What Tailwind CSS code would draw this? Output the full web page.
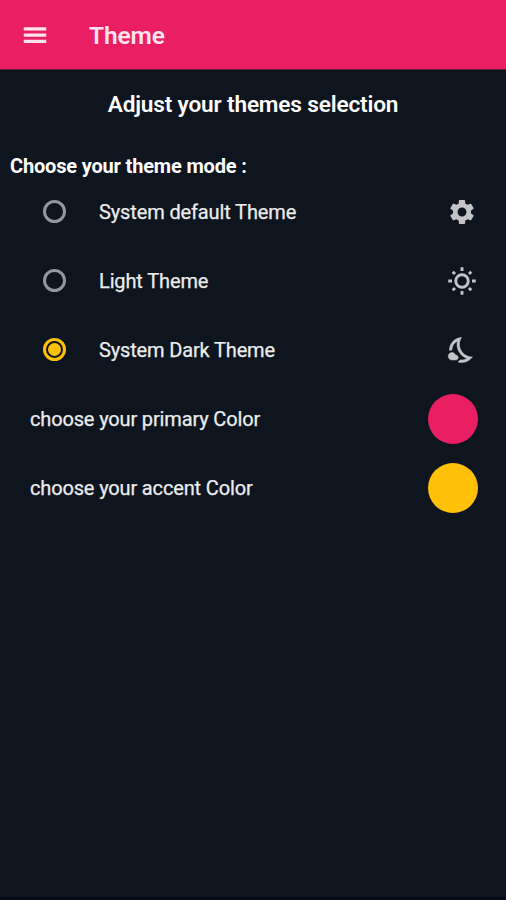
<!DOCTYPE html>
<html lang="en">
<head>
<meta charset="utf-8">
<title>Theme</title>
<script src="https://cdn.jsdelivr.net/npm/@tailwindcss/browser@4"></script>
</head>
<body class="w-[506px] h-[900px] overflow-hidden bg-[#0e151f] font-[Roboto,sans-serif] text-[#ececec] flex flex-col">
<header class="h-[70px] shrink-0 bg-[#e91e63] border-b border-[#68183a] flex items-center pl-5 text-[#ffe4ed]">
  <svg class="w-[30px] h-[30px]" viewBox="0 0 24 24" fill="currentColor"><path d="M3 18.3h18v-2.5H3v2.5zm0-5h18v-2.5H3v2.5zm0-7.5v2.5h18V5.800H3z"/></svg>
  <h1 class="ml-[39px] mt-[2px] text-[24.5px] font-semibold tracking-[-0.1px] leading-8 whitespace-nowrap">Theme</h1>
</header>
<main class="flex flex-col flex-1">
  <h2 class="h-[70px] text-center text-[22.6px] leading-[70px] font-semibold tracking-[-0.16px] text-white whitespace-nowrap">Adjust your themes selection</h2>
  <h3 class="h-[37px] pl-[10px] pt-[7px] text-[20px] leading-[38px] font-bold tracking-[-0.17px] text-white whitespace-nowrap">Choose your theme mode :</h3>
  <label class="h-[69px] flex items-center pl-[43px] pr-[29px]">
    <span class="size-[23px] rounded-full border-3 border-[#94979e]"></span>
    <span class="ml-[33px] text-[20px] tracking-[-0.13px] [-webkit-text-stroke:0.25px_#ececec] flex-1 whitespace-nowrap">System default Theme</span>
    <svg class="size-[30px] text-[#c3c4c8]" viewBox="0 0 24 24" fill="currentColor"><path d="M19.14 12.94c.04-.3.06-.61.06-.94 0-.32-.02-.64-.07-.94l2.03-1.58c.18-.14.23-.41.12-.61l-1.92-3.32c-.12-.22-.37-.29-.59-.22l-2.39.96c-.5-.38-1.03-.7-1.62-.94l-.36-2.54c-.04-.24-.24-.41-.48-.41h-3.84c-.24 0-.43.17-.47.41l-.36 2.54c-.59.24-1.13.57-1.62.94l-2.39-.96c-.22-.08-.47 0-.59.22L2.74 8.87c-.12.21-.08.47.12.61l2.03 1.58c-.05.3-.09.63-.09.94s.02.64.07.94l-2.03 1.58c-.18.14-.23.41-.12.61l1.92 3.32c.12.22.37.29.59.22l2.39-.96c.5.38 1.03.7 1.62.94l.36 2.54c.05.24.24.41.48.41h3.84c.24 0 .44-.17.47-.41l.36-2.54c.59-.24 1.13-.56 1.62-.94l2.39.96c.22.08.47 0 .59-.22l1.92-3.32c.12-.22.07-.47-.12-.61l-2.01-1.58zM12 15.6c-1.98 0-3.6-1.62-3.6-3.6s1.62-3.6 3.6-3.6 3.6 1.62 3.6 3.6-1.62 3.6-3.6 3.6z"/></svg>
  </label>
  <label class="h-[69px] flex items-center pl-[43px] pr-[29px]">
    <span class="size-[23px] rounded-full border-3 border-[#94979e]"></span>
    <span class="ml-[33px] text-[20px] tracking-[-0.13px] [-webkit-text-stroke:0.25px_#ececec] flex-1 whitespace-nowrap">Light Theme</span>
    <svg class="size-[30px] text-[#c3c4c8]" viewBox="0 0 24 24" fill="none" stroke="currentColor" stroke-width="2.3"><circle cx="12" cy="12" r="5"/><path d="M12 1v3M12 20v3M1 12h3M20 12h3M4.600 4.600l1.800 1.800M17.600 17.600l1.800 1.800M4.600 19.400l1.800-1.800M17.600 6.400l1.800-1.800"/></svg>
  </label>
  <label class="h-[69px] flex items-center pl-[43px] pr-[29px]">
    <span class="size-[23px] rounded-full border-3 border-[#ffc107] flex items-center justify-center"><span class="size-[13px] rounded-full bg-[#ffc107]"></span></span>
    <span class="ml-[33px] text-[20px] tracking-[-0.15px] [-webkit-text-stroke:0.25px_#ececec] flex-1 whitespace-nowrap">System Dark Theme</span>
    <svg class="size-[30px] text-[#c3c4c8]" viewBox="0 0 24 24" fill="currentColor" stroke="currentColor" stroke-width=".4"><path d="M19.78 17.51c-2.47 0-6.57-1.33-8.68-5.43C8.77 7.57 10.6 3.6 11.63 2.01 6.27 2.2 1.98 6.59 1.98 12c0 .14.02.28.02.42.61-.26 1.28-.42 1.98-.42 0-3.09 1.73-5.77 4.3-7.1C7.8 7.15 7.94 10.04 9.32 13c1.57 3.04 4.18 4.95 6.8 5.86-1.23.74-2.65 1.15-4.13 1.15-.5 0-1-.05-1.48-.14-.37.7-.94 1.27-1.64 1.64.98.32 2.03.5 3.11.5 3.5 0 6.58-1.8 8.37-4.52-.17.01-.37.02-.57.02zM7 16h-.18C6.4 14.84 5.3 14 4 14c-1.66 0-3 1.34-3 3s1.34 3 3 3h3c1.1 0 2-.9 2-2s-.9-2-2-2z"/></svg>
  </label>
  <div class="h-[69px] flex items-center justify-between pl-[30px] pr-[28.5px]">
    <span class="text-[20px] tracking-[-0.15px] [-webkit-text-stroke:0.25px_#ececec] whitespace-nowrap">choose your primary Color</span>
    <span class="size-[50px] rounded-full bg-[#e91e63]"></span>
  </div>
  <div class="h-[69px] flex items-center justify-between pl-[30px] pr-[28.5px]">
    <span class="text-[20px] tracking-[-0.15px] [-webkit-text-stroke:0.25px_#ececec] whitespace-nowrap">choose your accent Color</span>
    <span class="size-[50px] rounded-full bg-[#ffc107]"></span>
  </div>
</main>
<footer class="h-[3px] bg-[#090b1a]"></footer>
</body>
</html>
